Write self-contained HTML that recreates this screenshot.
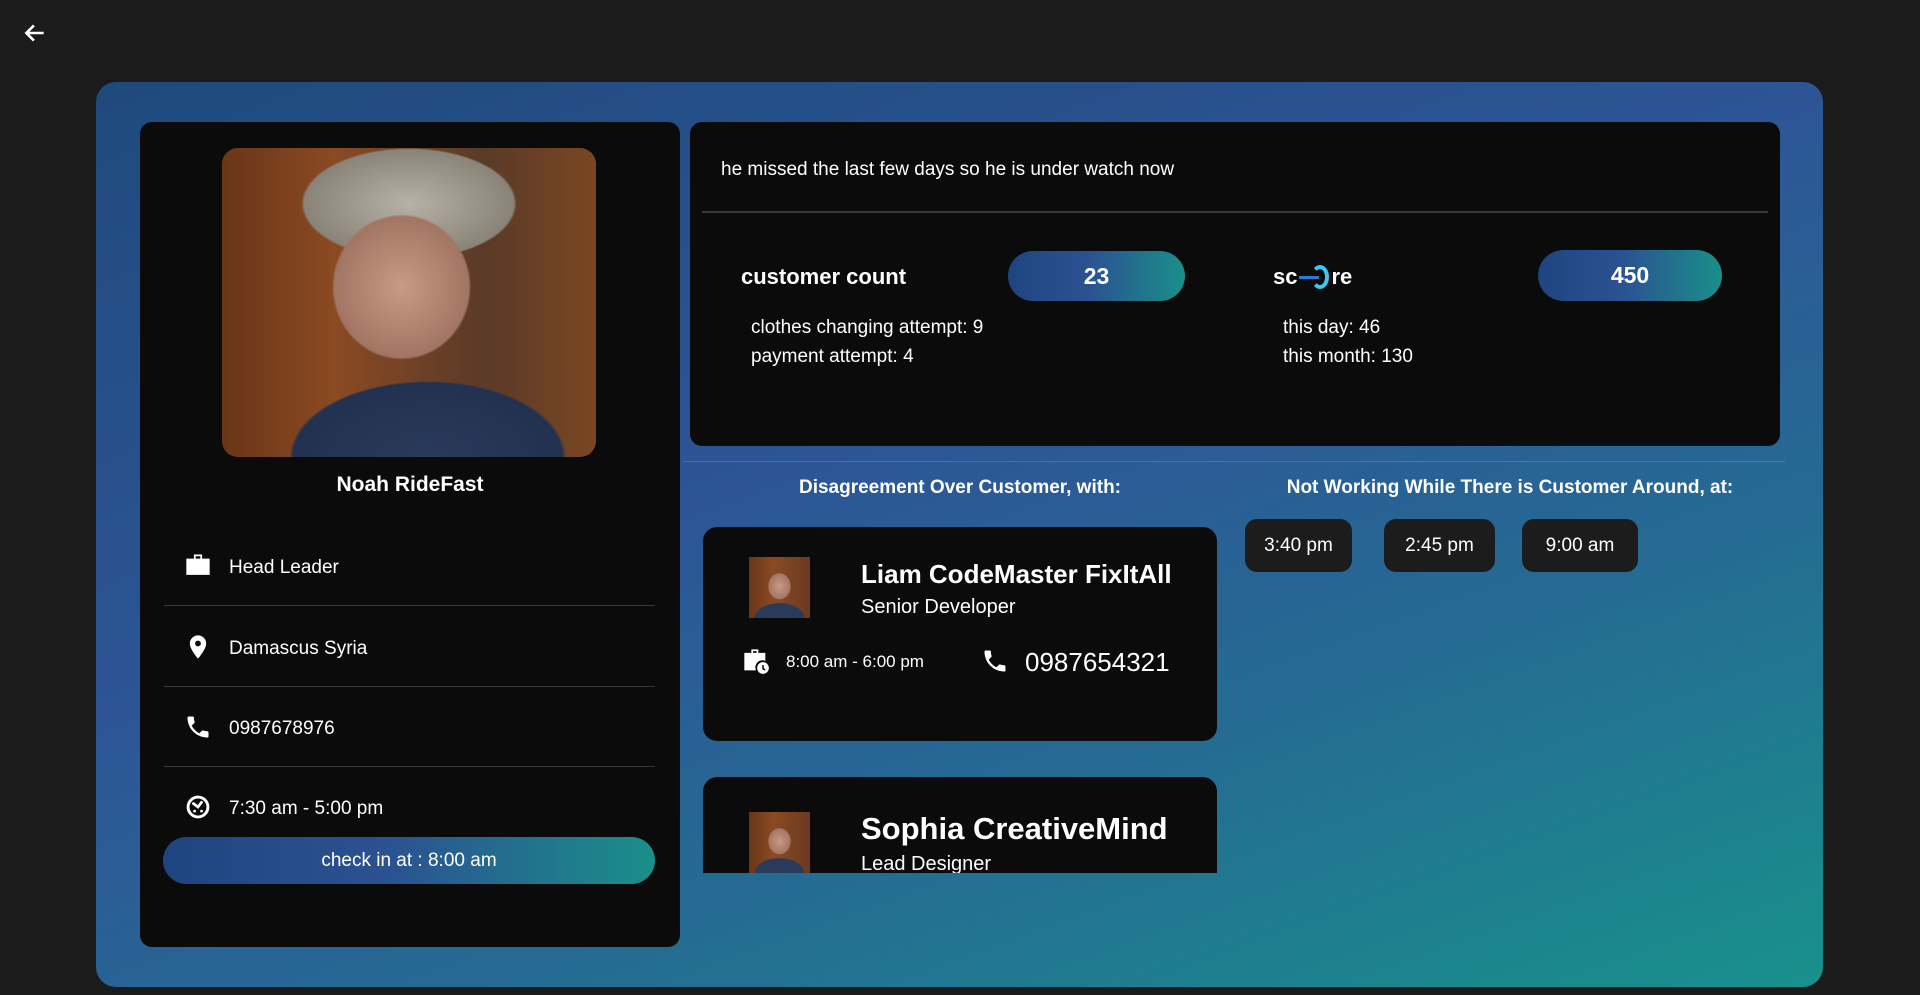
<!DOCTYPE html>
<html><head><meta charset="utf-8"><style>
*{margin:0;padding:0;box-sizing:border-box}
body{width:1920px;height:995px;background:#1b1b1b;font-family:"Liberation Sans",sans-serif;color:#fff;position:relative;overflow:hidden}
.abs{position:absolute}
.panel{left:96px;top:82px;width:1727px;height:905px;border-radius:20px;background:linear-gradient(160deg,#1f4a7c 0%,#2d5596 42%,#256c93 70%,#18918b 100%)}
.card{background:#0b0b0b;border-radius:12px}
.photo{left:222px;top:148px;width:374px;height:309px;border-radius:16px;overflow:hidden;background:radial-gradient(ellipse 30% 38% at 48% 45%,#c99a84 0%,#a27563 60%,transparent 62%),radial-gradient(ellipse 45% 30% at 55% 100%,#2a3a5a 0%,#233150 80%,transparent 82%),radial-gradient(ellipse 40% 25% at 50% 18%,#b8b2a6 0%,#8a8478 70%,transparent 72%),linear-gradient(90deg,#6a3518,#8a4a22 30%,#5a3a28 70%,#7a4622)}
.row{left:164px;width:491px;height:1px;background:#3a3a3a}
.lbl{font-size:19px;left:229px}
.ic{left:184px;width:28px;height:28px}
.pill{border-radius:26px;background:linear-gradient(90deg,#1f4580,#2b5191 45%,#1a8f8a);font-weight:bold;font-size:23px;display:flex;align-items:center;justify-content:center}
.chip{background:#1c1c1c;border-radius:12px;font-size:19px;display:flex;align-items:center;justify-content:center;top:519px;height:53px}
.av{width:61px;height:61px;background:radial-gradient(ellipse 30% 35% at 50% 48%,#c99a84 0%,#a27563 60%,transparent 62%),radial-gradient(ellipse 50% 30% at 50% 100%,#2a3a5a 80%,transparent 82%),linear-gradient(90deg,#6a3518,#8a4a22 40%,#6a3a22)}
</style></head><body>
<svg class="abs" style="left:22px;top:20px" width="26" height="26" viewBox="0 0 24 24"><path d="M20 12H5M11 5l-7 7 7 7" stroke="#fff" stroke-width="2.4" fill="none"/></svg>
<div class="abs panel"></div>
<div class="abs card" style="left:140px;top:122px;width:540px;height:825px"></div>
<div class="abs photo"></div>
<div class="abs" style="left:140px;width:540px;top:473px;text-align:center;font-weight:bold;font-size:21px">Noah RideFast</div>
<svg class="abs ic" style="top:551px" viewBox="0 0 24 24"><path d="M8.5 3h7v3.5H22v14H2v-14h6.5zM10 4.5v2h4v-2z" fill="#fff" fill-rule="evenodd"/></svg>
<div class="abs lbl" style="top:557px">Head Leader</div>
<div class="abs row" style="top:605px"></div>
<svg class="abs ic" style="top:633px" viewBox="0 0 24 24"><path d="M12 2a7 7 0 0 0-7 7c0 5 7 13 7 13s7-8 7-13a7 7 0 0 0-7-7zm0 9.5a2.5 2.5 0 1 1 0-5 2.5 2.5 0 0 1 0 5z" fill="#fff"/></svg>
<div class="abs lbl" style="top:638px">Damascus Syria</div>
<div class="abs row" style="top:686px"></div>
<svg class="abs ic" style="top:713px" viewBox="0 0 24 24"><path d="M6.6 10.8c1.4 2.8 3.8 5.1 6.6 6.6l2.2-2.2c.3-.3.7-.4 1-.2 1.1.4 2.3.6 3.6.6.6 0 1 .4 1 1V20c0 .6-.4 1-1 1C10.6 21 3 13.4 3 4c0-.6.4-1 1-1h3.5c.6 0 1 .4 1 1 0 1.3.2 2.5.6 3.6.1.3 0 .7-.2 1z" fill="#fff"/></svg>
<div class="abs lbl" style="top:718px">0987678976</div>
<div class="abs row" style="top:766px"></div>
<svg class="abs ic" style="top:793px" viewBox="0 0 24 24"><circle cx="12" cy="12" r="8.5" stroke="#fff" stroke-width="2.5" fill="none"/><path d="M8 9l4 3 3-4M9 15.5h.1M15 15.5h.1" stroke="#fff" stroke-width="2.3" fill="none" stroke-linecap="round"/></svg>
<div class="abs lbl" style="top:798px">7:30 am - 5:00 pm</div>
<div class="abs pill" style="left:163px;top:837px;width:492px;height:47px;font-weight:normal;font-size:19px">check in at : 8:00 am</div>

<div class="abs card" style="left:690px;top:122px;width:1090px;height:324px"></div>
<div class="abs" style="left:721px;top:159px;font-size:19px">he missed the last few days so he is under watch now</div>
<div class="abs" style="left:702px;top:211px;width:1066px;height:2px;background:#3a3a3a"></div>
<div class="abs" style="left:741px;top:264px;font-size:22px;font-weight:bold">customer count</div>
<div class="abs pill" style="left:1008px;top:251px;width:177px;height:50px">23</div>
<div class="abs" style="left:1273px;top:264px;font-size:22px;font-weight:bold">sc<span style="display:inline-block;width:34px;position:relative;height:20px;vertical-align:middle"><span style="position:absolute;left:2px;top:8px;width:20px;height:3px;background:#2a7bd6"></span><span style="position:absolute;left:14px;top:-3px;width:18px;height:24px;border:4px solid #3ec6f0;border-radius:50%;border-left-color:transparent"></span></span>re</div>
<div class="abs pill" style="left:1538px;top:250px;width:184px;height:51px">450</div>
<div class="abs" style="left:751px;top:313px;font-size:19px;line-height:29px">clothes changing attempt: 9<br>payment attempt: 4</div>
<div class="abs" style="left:1283px;top:313px;font-size:19px;line-height:29px">this day: 46<br>this month: 130</div>
<div class="abs" style="left:683px;top:461px;width:1102px;height:1px;background:rgba(255,255,255,.15)"></div>
<div class="abs" style="left:700px;width:520px;top:477px;text-align:center;font-weight:bold;font-size:19px">Disagreement Over Customer, with:</div>
<div class="abs" style="left:1220px;width:580px;top:477px;text-align:center;font-weight:bold;font-size:19px">Not Working While There is Customer Around, at:</div>
<div class="abs chip" style="left:1245px;width:107px">3:40 pm</div>
<div class="abs chip" style="left:1384px;width:111px">2:45 pm</div>
<div class="abs chip" style="left:1522px;width:116px">9:00 am</div>

<div class="abs card" style="left:703px;top:527px;width:514px;height:214px;border-radius:14px"></div>
<div class="abs av" style="left:749px;top:557px"></div>
<div class="abs" style="left:861px;top:559px;font-size:26px;font-weight:bold">Liam CodeMaster FixItAll</div>
<div class="abs" style="left:861px;top:596px;font-size:20px">Senior Developer</div>
<svg class="abs" style="left:742px;top:647px" width="28" height="28" viewBox="0 0 24 24"><path d="M8 2h6v3h6v7a6 6 0 0 0-8 8H2V5h6zM9.5 3.5v1.5h3V3.5z" fill="#fff" fill-rule="evenodd"/><circle cx="18" cy="18" r="5" fill="#fff"/><path d="M18 15.5v3l1.8 1.2" stroke="#000" stroke-width="1.3" fill="none"/></svg>
<div class="abs" style="left:786px;top:652px;font-size:17px">8:00 am - 6:00 pm</div>
<svg class="abs" style="left:981px;top:647px" width="28" height="28" viewBox="0 0 24 24"><path d="M6.6 10.8c1.4 2.8 3.8 5.1 6.6 6.6l2.2-2.2c.3-.3.7-.4 1-.2 1.1.4 2.3.6 3.6.6.6 0 1 .4 1 1V20c0 .6-.4 1-1 1C10.6 21 3 13.4 3 4c0-.6.4-1 1-1h3.5c.6 0 1 .4 1 1 0 1.3.2 2.5.6 3.6.1.3 0 .7-.2 1z" fill="#fff"/></svg>
<div class="abs" style="left:1025px;top:647px;font-size:26px">0987654321</div>

<div class="abs" style="left:703px;top:777px;width:514px;height:96px;overflow:hidden;border-radius:14px 14px 0 0">
<div class="abs card" style="left:0;top:0;width:514px;height:200px;border-radius:14px"></div>
<div class="abs av" style="left:46px;top:35px"></div>
<div class="abs" style="left:158px;top:34px;font-size:31px;font-weight:bold">Sophia CreativeMind</div>
<div class="abs" style="left:158px;top:76px;font-size:20px">Lead Designer</div>
</div>
</body></html>
